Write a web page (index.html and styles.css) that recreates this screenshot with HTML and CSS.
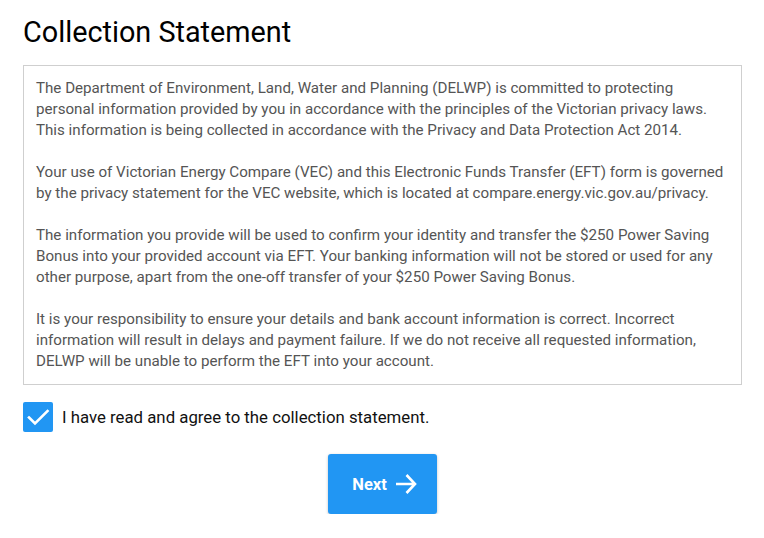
FILE: index.html
```html
<!DOCTYPE html>
<html lang="en">

<head>
    <meta charset="UTF-8">
    <meta name="viewport" content="width=device-width, initial-scale=1.0">
    <title>Collection Statement</title>
    <link rel="stylesheet" href="styles.css">
</head>

<body>
    <div class="page">
        <h1 class="title">Collection Statement</h1>

        <div class="statement">
            <p>The Department of Environment, Land, Water and Planning (DELWP) is committed to protecting personal information provided by you in accordance with the principles of the Victorian privacy laws. This information is being collected in accordance with the Privacy and Data Protection Act 2014.</p>
            <p>Your use of Victorian Energy Compare (VEC) and this Electronic Funds Transfer (EFT) form is governed by the privacy statement for the VEC website, which is located at compare.energy.vic.gov.au/privacy.</p>
            <p>The information you provide will be used to confirm your identity and transfer the $250 Power Saving Bonus into your provided account via EFT. Your banking information will not be stored or used for any other purpose, apart from the one-off transfer of your $250 Power Saving Bonus.</p>
            <p>It is your responsibility to ensure your details and bank account information is correct. Incorrect information will result in delays and payment failure. If we do not receive all requested information, DELWP will be unable to perform the EFT into your account.</p>
        </div>

        <label class="agree">
            <span class="check">
                <svg width="30" height="30" viewBox="0 0 30 30">
                    <path d="M6 15.5 L12 21.5 L24.5 9" fill="none" stroke="#fff" stroke-width="2.6" stroke-linecap="square" />
                </svg>
            </span>
            <span class="agree-text">I have read and agree to the collection statement.</span>
        </label>

        <div class="actions">
            <button class="next" type="button">
                Next
                <svg width="22" height="22" viewBox="0 0 22 22">
                    <path d="M1 11 H20 M11.5 2 L20 11 L11.5 20" fill="none" stroke="#fff" stroke-width="2.6" />
                </svg>
            </button>
        </div>
    </div>
</body>

</html>
```

FILE: styles.css
```css
* {
    margin: 0;
    padding: 0;
    box-sizing: border-box;
}

body {
    font-family: Roboto, "Liberation Sans", sans-serif;
    background: #fff;
    color: #111;
}

.page {
    padding: 14px 22px 0 23px;
}

.title {
    font-size: 28.8px;
    font-weight: 400;
    line-height: 36px;
    color: #000;
    margin-bottom: 15px;
}

.statement {
    border: 1px solid #cfcfcf;
    padding: 12px 12px 12px 12px;
    font-size: 15.15px;
    line-height: 21px;
    color: #555;
}

.statement p {
    margin-bottom: 21px;
}

.statement p:last-child {
    margin-bottom: 0;
}

.agree {
    display: flex;
    align-items: center;
    gap: 9px;
    margin-top: 17px;
}

.check {
    display: block;
    width: 30px;
    height: 30px;
    background: #2196f3;
    border-radius: 2px;
}

.check svg {
    display: block;
}

.agree-text {
    font-size: 16.8px;
    color: #111;
}

.actions {
    display: flex;
    justify-content: center;
    margin-top: 22px;
}

.next {
    display: flex;
    align-items: center;
    justify-content: center;
    gap: 8px;
    width: 109px;
    height: 60px;
    padding-left: 4px;
    border: none;
    border-radius: 3px;
    background: #2196f3;
    color: #fff;
    font-family: Roboto, "Liberation Sans", sans-serif;
    font-size: 16.5px;
    font-weight: 700;
    box-shadow: 0 1px 3px rgba(0, 0, 0, 0.25);
}
```
